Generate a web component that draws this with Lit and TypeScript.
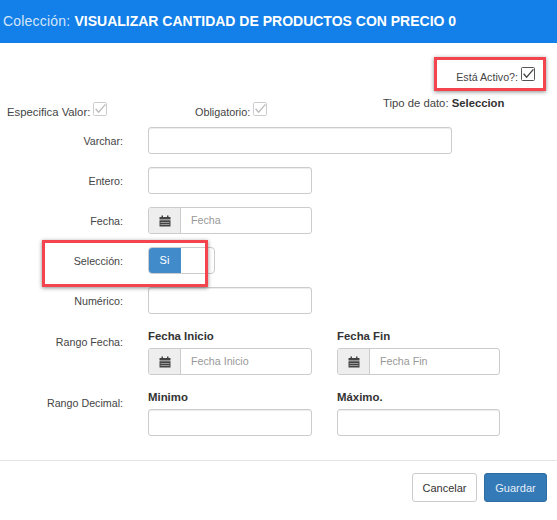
import {LitElement, css, html, svg} from 'lit';
import {customElement} from 'lit/decorators.js';

const checkMark = (muted: boolean) => html`
  <svg class="check ${muted ? 'muted' : ''}" viewBox="0 0 14 14" width="14" height="14">
    <rect x="0.5" y="0.5" width="13" height="13" rx="1"></rect>
    ${svg`<path d="M2.6 6.8 L5.6 10.2 L12.4 2.4"></path>`}
  </svg>
`;

const calendar = html`
  <svg class="cal" viewBox="0 0 12 12" width="12" height="12">
    <path d="M2.5 0.5h1.5v1.5h4v-1.5h1.5v1.5h2v2.5h-11v-2.5h2z"></path>
    <path d="M0.5 5.2h11v6.3h-11zM1.5 7h9v.6h-9zM1.5 9h9v.6h-9z" fill-rule="evenodd"></path>
  </svg>
`;

@customElement('app-root')
export class AppRoot extends LitElement {
  static styles = css`
    :host {
      display: block;
      position: relative;
      width: 557px;
      height: 520px;
      background: #fff;
      color: #333;
      font-family: "Liberation Sans", Arial, sans-serif;
      font-size: 11px;
      overflow: hidden;
    }
    .header {
      height: 43px;
      box-sizing: border-box;
      padding: 13px 0 0 3px;
      background: #137fe8;
      color: #d3e6fa;
      font-size: 14px;
      line-height: 16px;
      letter-spacing: 0.2px;
      white-space: nowrap;
    }
    .header b {
      color: #fff;
      letter-spacing: 0;
    }
    .active-row {
      display: flex;
      justify-content: flex-end;
      align-items: flex-end;
      gap: 3px;
      height: 38px;
      padding-right: 22px;
      font-size: 10.7px;
      line-height: 14px;
      color: #444;
    }
    .active-row span {
      margin-bottom: -3px;
    }
    .flags {
      display: grid;
      grid-template-columns: 188px 188px 1fr;
      height: 46px;
      padding-left: 7px;
      box-sizing: border-box;
      padding-top: 18px;
      font-size: 11.3px;
    }
    .flag {
      display: flex;
      align-items: flex-end;
      gap: 3px;
      height: 20px;
      line-height: 14px;
      color: #444;
    }
    .flag.short {
      font-size: 10.8px;
    }
    .flag .check {
      margin-bottom: 3px;
    }
    .type {
      margin-top: -3px;
      line-height: 14px;
      color: #444;
    }
    .type b {
      color: #333;
    }
    .check rect {
      fill: #fff;
      stroke: #555;
    }
    .check path {
      fill: none;
      stroke: #444;
      stroke-width: 1.3;
    }
    .check.muted rect {
      stroke: #ccc;
    }
    .check.muted path {
      stroke: #bbb;
    }
    .form {
      display: grid;
      grid-template-columns: 123px 1fr;
      column-gap: 25px;
      row-gap: 13px;
    }
    .form > label {
      align-self: center;
      text-align: right;
      color: #444;
      font-size: 10.7px;
      line-height: 14px;
    }
    .form > label.low {
      align-self: end;
      padding-bottom: 26px;
    }
    .input {
      display: block;
      box-sizing: border-box;
      height: 27px;
      width: 164px;
      border: 1px solid #ccc;
      border-radius: 3px;
      background: #fff;
      box-shadow: inset 0 1px 1px rgba(0, 0, 0, 0.075);
    }
    .input.wide {
      width: 304px;
    }
    .input.fin {
      width: 163px;
    }
    .group {
      display: flex;
      box-sizing: border-box;
      height: 27px;
      width: 164px;
      border: 1px solid #ccc;
      border-radius: 3px;
      overflow: hidden;
    }
    .group.fin {
      width: 163px;
    }
    .addon {
      display: flex;
      align-items: center;
      justify-content: center;
      flex: none;
      width: 31px;
      background: #eee;
      border-right: 1px solid #ccc;
    }
    .cal {
      fill: #444;
    }
    .placeholder {
      padding-left: 10px;
      line-height: 25px;
      font-size: 10.7px;
      color: #999;
    }
    .toggle {
      display: flex;
      box-sizing: border-box;
      height: 27px;
      width: 67px;
      border: 1px solid #ccc;
      border-radius: 4px;
      overflow: hidden;
    }
    .toggle span {
      width: 33px;
      margin: -1px 0 -1px -1px;
      background: #428bca;
      color: #fff;
      text-align: center;
      line-height: 27px;
    }
    .pair {
      display: grid;
      grid-template-columns: 164px 163px;
      column-gap: 25px;
      row-gap: 5px;
      margin-top: 2px;
    }
    .pair b {
      font-size: 11.4px;
      line-height: 14px;
      color: #333;
    }
    .footer {
      display: flex;
      justify-content: flex-end;
      gap: 7px;
      margin-top: 24px;
      padding: 12px 10px 0 0;
      border-top: 1px solid #e5e5e5;
    }
    .btn {
      box-sizing: border-box;
      height: 29px;
      border: 1px solid #ccc;
      border-radius: 3px;
      background: #fff;
      color: #333;
      font: 11px "Liberation Sans", Arial, sans-serif;
      padding: 0;
    }
    .btn.cancel {
      width: 65px;
    }
    .btn.save {
      width: 63px;
      background: #337ab7;
      border-color: #2e6da4;
      color: #e4eef7;
    }
    .mark {
      position: absolute;
      box-sizing: border-box;
      border: 3px solid #f4444e;
      box-shadow: 0 1px 4px rgba(0, 0, 0, 0.45);
    }
    .mark.one {
      left: 434px;
      top: 57px;
      width: 112px;
      height: 34px;
    }
    .mark.two {
      left: 42px;
      top: 240px;
      width: 166px;
      height: 47px;
    }
  `;

  dateGroup(text: string, fin = false) {
    return html`
      <div class="group ${fin ? 'fin' : ''}">
        <div class="addon">${calendar}</div>
        <div class="placeholder">${text}</div>
      </div>
    `;
  }

  render() {
    return html`
      <div class="header">Colección: <b>VISUALIZAR CANTIDAD DE PRODUCTOS CON PRECIO 0</b></div>

      <div class="active-row"><span>Está Activo?:</span>${checkMark(false)}</div>

      <div class="flags">
        <div class="flag">Especifica Valor: ${checkMark(true)}</div>
        <div class="flag short">Obligatorio: ${checkMark(true)}</div>
        <div class="type">Tipo de dato: <b>Seleccion</b></div>
      </div>

      <div class="form">
        <label>Varchar:</label>
        <div class="input wide"></div>

        <label>Entero:</label>
        <div class="input"></div>

        <label>Fecha:</label>
        ${this.dateGroup('Fecha')}

        <label>Selección:</label>
        <div class="toggle"><span>Si</span></div>

        <label>Numérico:</label>
        <div class="input"></div>

        <label class="low">Rango Fecha:</label>
        <div class="pair">
          <b>Fecha Inicio</b>
          <b>Fecha Fin</b>
          ${this.dateGroup('Fecha Inicio')}
          ${this.dateGroup('Fecha Fin', true)}
        </div>

        <label class="low">Rango Decimal:</label>
        <div class="pair">
          <b>Minimo</b>
          <b>Máximo.</b>
          <div class="input"></div>
          <div class="input fin"></div>
        </div>
      </div>

      <div class="footer">
        <button class="btn cancel">Cancelar</button>
        <button class="btn save">Guardar</button>
      </div>

      <div class="mark one"></div>
      <div class="mark two"></div>
    `;
  }
}
